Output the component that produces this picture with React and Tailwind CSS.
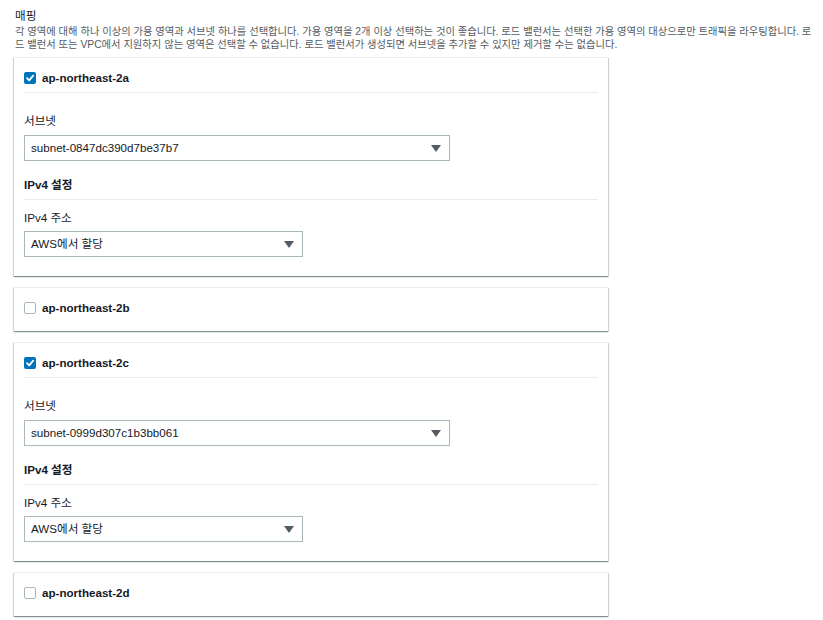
import React from "react";

const FONT = { fontFamily: '"Liberation Sans", "Noto Sans CJK KR", sans-serif' };

function Check({ checked }) {
  if (checked) {
    return (
      <span className="flex h-[12px] w-[12px] items-center justify-center rounded-[2px] bg-[#0073bb]">
        <svg width="10" height="10" viewBox="0 0 10 10">
          <path d="M2 5.2 L4.2 7.4 L8.2 2.6" fill="none" stroke="#ffffff" strokeWidth="1.8" strokeLinecap="round" strokeLinejoin="round" />
        </svg>
      </span>
    );
  }
  return <span className="block h-[12px] w-[12px] rounded-[2px] border border-[#aab7b8] bg-white" />;
}

function Select({ value, width }) {
  return (
    <div className={`flex h-[26px] items-center justify-between border border-[#aab7b8] bg-white pl-[6px] pr-[8px] ${width}`}>
      <span className="text-[11.6px] text-[#16191f]">{value}</span>
      <svg width="10" height="7" viewBox="0 0 10 7">
        <path d="M0 0 L10 0 L5 7 Z" fill="#545b64" />
      </svg>
    </div>
  );
}

function Card({ zone, checked, subnet }) {
  return (
    <div className="border-t border-[#eaeded] bg-white px-[10px] shadow-[0_1px_1px_0_rgba(0,28,36,0.3),1px_1px_1px_0_rgba(0,28,36,0.15),-1px_1px_1px_0_rgba(0,28,36,0.15)]">
      <div className={checked ? "border-b border-[#eaeded] pb-[6px] pt-[12px]" : "pb-[15px] pt-[12px]"}>
        <div className="flex h-[16px] items-center gap-[6px]">
          <Check checked={checked} />
          <span className="text-[11.6px] font-bold text-[#16191f]">{zone}</span>
        </div>
      </div>
      {checked && (
        <div className="pb-[19px] pt-[20px]">
          <div className="h-[16px] text-[11.6px] leading-[16px] text-[#16191f]">서브넷</div>
          <div className="mt-[6px]">
            <Select value={subnet} width="w-[426px]" />
          </div>
          <div className="mt-[16px] border-b border-[#eaeded] pb-[6px]">
            <div className="h-[16px] text-[11.6px] font-bold leading-[16px] text-[#16191f]">IPv4 설정</div>
          </div>
          <div className="mt-[10px] h-[16px] text-[11.6px] leading-[16px] text-[#16191f]">IPv4 주소</div>
          <div className="mt-[5px]">
            <Select value="AWS에서 할당" width="w-[279px]" />
          </div>
        </div>
      )}
    </div>
  );
}

export default function App() {
  return (
    <div className="min-h-[620px] w-[823px] overflow-hidden bg-white px-[14px] pt-[8px]" style={FONT}>
      <div className="pl-px">
        <div className="h-[16px] text-[11.6px] leading-[16px] text-[#16191f]">매핑</div>
        <div className="mt-[1px] text-[10.3px] leading-[13px] text-[#545b64]">
          <div className="whitespace-nowrap">
            각 영역에 대해 하나 이상의 가용 영역과 서브넷 하나를 선택합니다. 가용 영역을 2개 이상 선택하는 것이 좋습니다. 로드 밸런서는 선택한 가용 영역의 대상으로만 트래픽을 라우팅합니다. 로
          </div>
          <div className="whitespace-nowrap">
            드 밸런서 또는 VPC에서 지원하지 않는 영역은 선택할 수 없습니다. 로드 밸런서가 생성되면 서브넷을 추가할 수 있지만 제거할 수는 없습니다.
          </div>
        </div>
      </div>
      <div className="mt-[6px] flex w-[594px] flex-col gap-[11px]">
        <Card zone="ap-northeast-2a" checked subnet="subnet-0847dc390d7be37b7" />
        <Card zone="ap-northeast-2b" />
        <Card zone="ap-northeast-2c" checked subnet="subnet-0999d307c1b3bb061" />
        <Card zone="ap-northeast-2d" />
      </div>
    </div>
  );
}
